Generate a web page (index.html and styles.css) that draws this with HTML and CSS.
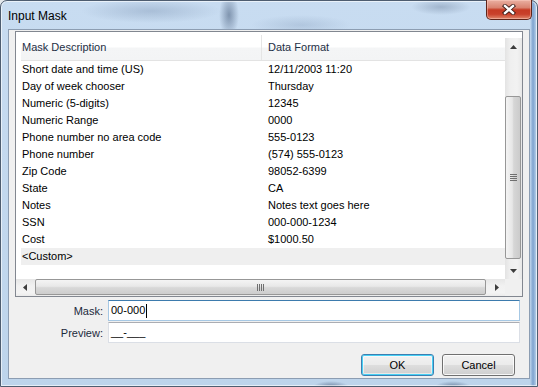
FILE: index.html
```html
<!DOCTYPE html>
<html lang="en">
<head>
    <meta charset="UTF-8">
    <title>Input Mask</title>
    <link rel="stylesheet" href="styles.css">
</head>
<body>
    <div class="window">
        <div class="titlebar">
            <span class="title">Input Mask</span>
            <div class="close">
                <svg width="14" height="11" viewBox="0 0 14 11">
                    <path d="M3 2 L11 9 M11 2 L3 9" stroke="#3a1a16" stroke-width="4.2" stroke-linecap="square"/>
                    <path d="M3 2 L11 9 M11 2 L3 9" stroke="#ffffff" stroke-width="2.4" stroke-linecap="square"/>
                </svg>
            </div>
        </div>

        <div class="client">
            <!-- Mask list -->
            <div class="listbox">
                <div class="list-view">
                    <div class="list-header">
                        <div class="hcol c1">Mask Description</div>
                        <div class="hcol c2">Data Format</div>
                    </div>
                    <div class="row"><span class="c1">Short date and time (US)</span><span class="c2">12/11/2003 11:20</span></div>
                    <div class="row"><span class="c1">Day of week chooser</span><span class="c2">Thursday</span></div>
                    <div class="row"><span class="c1">Numeric (5-digits)</span><span class="c2">12345</span></div>
                    <div class="row"><span class="c1">Numeric Range</span><span class="c2">0000</span></div>
                    <div class="row"><span class="c1">Phone number no area code</span><span class="c2">555-0123</span></div>
                    <div class="row"><span class="c1">Phone number</span><span class="c2">(574) 555-0123</span></div>
                    <div class="row"><span class="c1">Zip Code</span><span class="c2">98052-6399</span></div>
                    <div class="row"><span class="c1">State</span><span class="c2">CA</span></div>
                    <div class="row"><span class="c1">Notes</span><span class="c2">Notes text goes here</span></div>
                    <div class="row"><span class="c1">SSN</span><span class="c2">000-000-1234</span></div>
                    <div class="row"><span class="c1">Cost</span><span class="c2">$1000.50</span></div>
                    <div class="row selected"><span class="c1">&lt;Custom&gt;</span><span class="c2"></span></div>
                </div>

                <div class="vscroll">
                    <div class="sb-btn">
                        <svg width="7" height="4" viewBox="0 0 7 4"><path d="M0 4 L3.5 0 L7 4 Z" fill="#3c3c3c"/></svg>
                    </div>
                    <div class="sb-track">
                        <div class="vthumb">
                            <svg width="7" height="7" viewBox="0 0 7 7"><path d="M0 0.5 H7 M0 2.5 H7 M0 4.5 H7 M0 6.5 H7" stroke="#6f6f6f" stroke-width="1"/></svg>
                        </div>
                    </div>
                    <div class="sb-btn">
                        <svg width="7" height="4" viewBox="0 0 7 4"><path d="M0 0 L7 0 L3.5 4 Z" fill="#3c3c3c"/></svg>
                    </div>
                </div>

                <div class="hscroll">
                    <div class="sb-btn">
                        <svg width="4" height="7" viewBox="0 0 4 7"><path d="M4 0 L4 7 L0 3.5 Z" fill="#3c3c3c"/></svg>
                    </div>
                    <div class="sb-track">
                        <div class="hthumb">
                            <svg width="7" height="7" viewBox="0 0 7 7"><path d="M0.5 0 V7 M2.5 0 V7 M4.5 0 V7 M6.5 0 V7" stroke="#6f6f6f" stroke-width="1"/></svg>
                        </div>
                    </div>
                    <div class="sb-btn">
                        <svg width="4" height="7" viewBox="0 0 4 7"><path d="M0 0 L4 3.5 L0 7 Z" fill="#3c3c3c"/></svg>
                    </div>
                </div>

                <div class="corner"></div>
            </div>

            <!-- Mask fields -->
            <div class="field-row first">
                <label class="field-label">Mask:</label>
                <div class="field focused">00-000<span class="caret"></span></div>
            </div>
            <div class="field-row">
                <label class="field-label">Preview:</label>
                <div class="field">__-___</div>
            </div>

            <div class="buttons">
                <button class="btn default" type="button">OK</button>
                <button class="btn" type="button">Cancel</button>
            </div>
        </div>
    </div>
</body>
</html>
```

FILE: styles.css
```css
html, body {
    height: 100%;
    margin: 0;
    overflow: hidden;
}

body {
    background-color: #e4e8ec;
    font-family: "Liberation Sans", Arial, sans-serif;
    font-size: 11px;
    color: #000;
}

/* Window frame (aero glass look) */
.window {
    box-sizing: border-box;
    width: 538px;
    height: 387px;
    display: flex;
    flex-direction: column;
    padding: 0 7px 7px 7px;
    border: 1px solid #4e5d70;
    border-radius: 7px 7px 0 0;
    background:
        radial-gradient(ellipse 70px 12px at 150px 10px, rgba(90, 115, 150, 0.28), transparent),
        radial-gradient(ellipse 10px 22px at 228px 14px, rgba(40, 62, 95, 0.45), transparent),
        radial-gradient(ellipse 50px 10px at 300px 24px, rgba(90, 115, 150, 0.2), transparent),
        radial-gradient(ellipse 30px 8px at 440px 6px, rgba(70, 90, 120, 0.3), transparent),
        radial-gradient(ellipse 18px 6px at 330px 386px, rgba(40, 60, 95, 0.55), transparent),
        radial-gradient(ellipse 18px 6px at 452px 386px, rgba(40, 60, 95, 0.55), transparent),
        linear-gradient(90deg, transparent 529px, #7ea3cf 532px, #c4daf0 536px),
        linear-gradient(180deg, #c8dcf1 0%, #bdd4eb 100%);
    box-shadow: inset 0 0 0 1px rgba(255, 255, 255, 0.6);
}

.titlebar {
    height: 28px;
    display: flex;
    align-items: flex-start;
}

.title {
    margin-top: 8px;
    font-size: 12px;
    color: #000;
}

.close {
    margin-left: auto;
    margin-right: -2px;
    margin-top: -1px;
    width: 46px;
    height: 20px;
    box-sizing: border-box;
    display: flex;
    align-items: center;
    justify-content: center;
    border: 1px solid #5f2419;
    border-top: none;
    border-radius: 0 0 5px 5px;
    background: linear-gradient(180deg, #eab0a2 0%, #d98370 40%, #c63b24 52%, #c9412b 75%, #e0876b 100%);
    box-shadow: inset 0 0 0 1px rgba(255, 210, 200, 0.45);
}

/* Client area */
.client {
    flex: 1;
    display: flex;
    flex-direction: column;
    padding: 1px 6px 0 6px;
    border: 1px solid #8c9db2;
    background-color: #f0f0f0;
}

.listbox {
    height: 266px;
    box-sizing: border-box;
    border: 1px solid #828790;
    background-color: white;
    display: grid;
    grid-template-columns: 1fr 17px;
    grid-template-rows: 1fr 17px;
}

.list-view {
    padding: 3px 0 0 5px;
    overflow: hidden;
}

.list-header {
    display: flex;
    height: 26px;
    box-sizing: border-box;
    border-bottom: 1px solid #e3e3e3;
    background: linear-gradient(180deg, #ffffff 0%, #ffffff 48%, #f4f5f6 52%, #f3f4f5 100%);
    color: #1e2f45;
}

.hcol {
    line-height: 25px;
    box-sizing: border-box;
}

.hcol.c1 {
    width: 241px;
    padding-left: 1px;
    border-right: 1px solid #e5e5e5;
}

.hcol.c2 {
    padding-left: 6px;
}

.row {
    display: flex;
    height: 17px;
    line-height: 17px;
    white-space: nowrap;
}

.row .c1 {
    width: 241px;
    padding-left: 1px;
    box-sizing: border-box;
}

.row .c2 {
    padding-left: 6px;
}

.row.selected {
    background-color: #efefef;
}

/* Scrollbars */
.vscroll {
    display: flex;
    flex-direction: column;
    margin-top: 6px;
    background: linear-gradient(90deg, #e3e3e3 0%, #efefef 30%, #f2f2f2 70%, #e8e8e8 100%);
}

.sb-btn {
    flex: 0 0 17px;
    display: flex;
    align-items: center;
    justify-content: center;
}

.vscroll .sb-track {
    flex: 1;
    padding: 41px 1px 3px 0;
}

.vthumb {
    height: 100%;
    box-sizing: border-box;
    border: 1px solid #979797;
    border-radius: 2px;
    background: linear-gradient(90deg, #f4f4f4 0%, #e6e6e6 45%, #d6d6d6 55%, #cbcbcb 100%);
    display: flex;
    align-items: center;
    justify-content: center;
}

.hscroll {
    display: flex;
    background: linear-gradient(180deg, #e6e6e6 0%, #f1f1f1 40%, #f3f3f3 80%, #ebebeb 100%);
}

.hscroll .sb-track {
    flex: 1;
    padding: 0 2px 1px 2px;
}

.hthumb {
    height: 100%;
    box-sizing: border-box;
    border: 1px solid #979797;
    border-radius: 2px;
    background: linear-gradient(180deg, #f4f4f4 0%, #e8e8e8 45%, #d8d8d8 55%, #cdcdcd 100%);
    display: flex;
    align-items: center;
    justify-content: center;
}

.corner {
    background-color: #f0f0f0;
}

/* Mask / preview fields */
.field-row {
    display: flex;
    align-items: center;
    margin-top: 1px;
}

.field-row.first {
    margin-top: 3px;
}

.field-label {
    width: 88px;
    text-align: right;
    color: #1c2a3c;
}

.field {
    flex: 1;
    height: 21px;
    box-sizing: border-box;
    margin-left: 5px;
    margin-right: 3px;
    padding: 0 2px;
    line-height: 19px;
    background-color: white;
    border: 1px solid #dbdfe6;
    border-top-color: #abadb3;
    display: flex;
    align-items: center;
}

.field.focused {
    border-color: #a6c8e4;
    border-top-color: #3d7bad;
}

.caret {
    width: 1px;
    height: 14px;
    margin-left: 1px;
    background-color: black;
}

/* Dialog buttons */
.buttons {
    display: flex;
    justify-content: flex-end;
    gap: 8px;
    margin-top: 11px;
    padding-right: 8px;
}

.btn {
    width: 73px;
    height: 22px;
    padding: 0;
    font-family: "Liberation Sans", Arial, sans-serif;
    font-size: 11px;
    color: #000;
    border: 1px solid #707070;
    border-radius: 3px;
    background: linear-gradient(180deg, #f2f2f2 0%, #ebebeb 48%, #dddddd 52%, #cfcfcf 100%);
    box-shadow: inset 0 0 0 1px rgba(255, 255, 255, 0.8);
}

.btn.default {
    border-color: #3c7fb1;
    box-shadow: inset 0 0 0 1px #48d0f5, inset 0 0 0 2px rgba(255, 255, 255, 0.5);
}
```
